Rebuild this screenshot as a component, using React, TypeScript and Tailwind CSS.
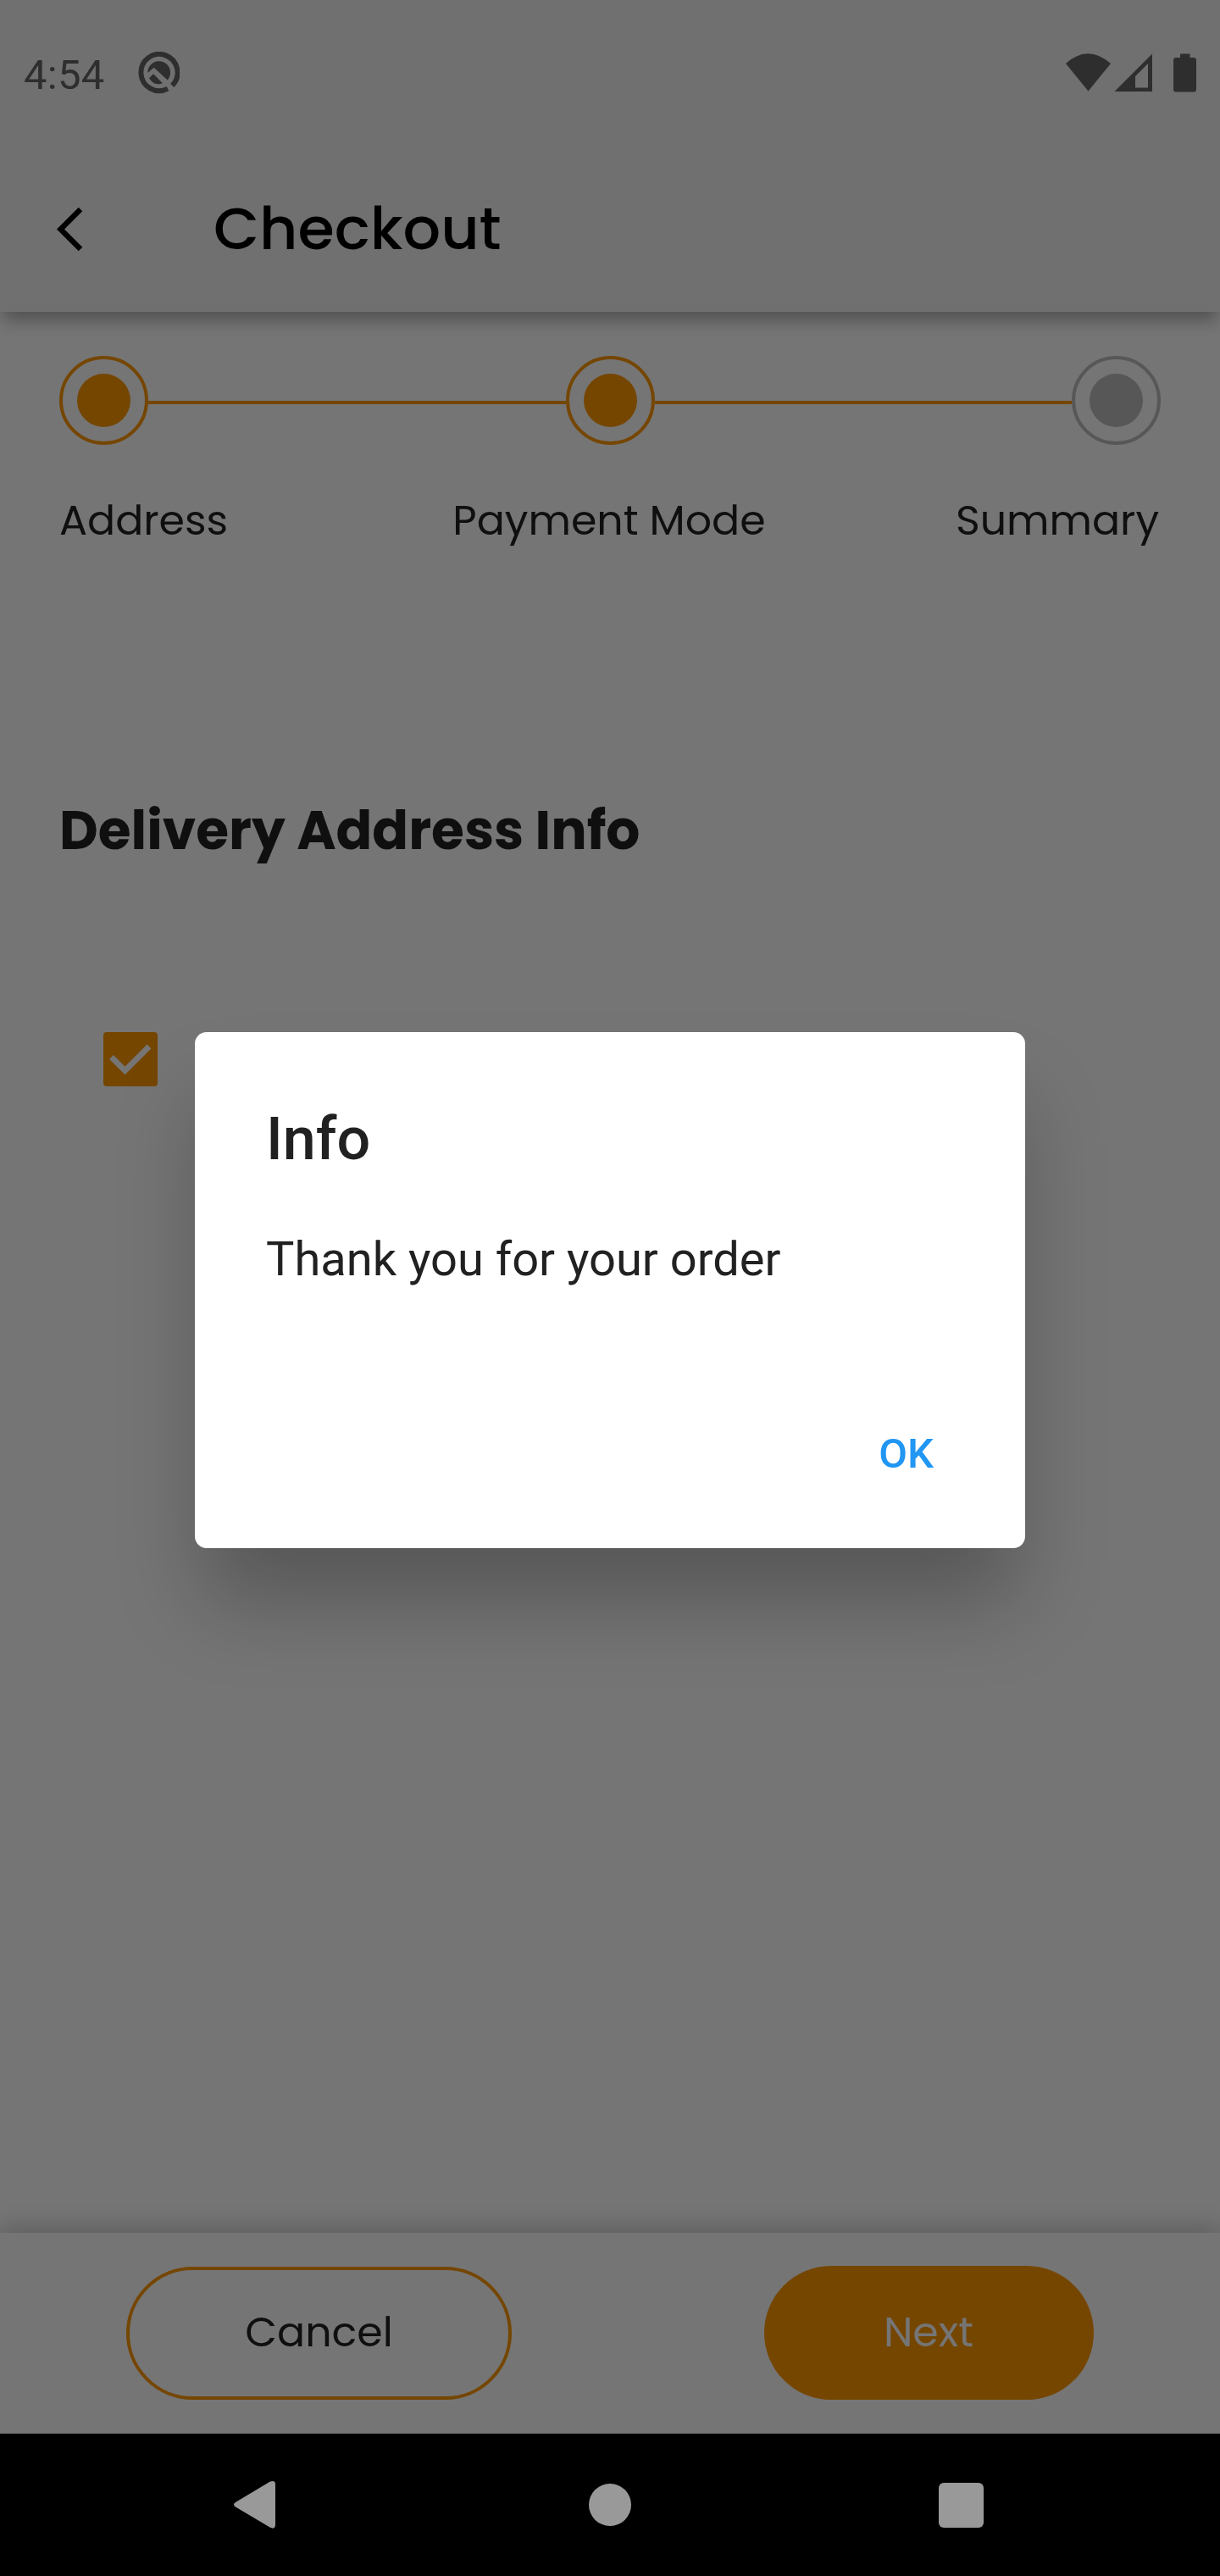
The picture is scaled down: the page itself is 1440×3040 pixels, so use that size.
import type { ReactNode } from "react";

const brand = "font-['Poppins','Inter',sans-serif]";

function StatusBar() {
  return (
    <div className="flex h-[84px] items-start justify-between px-[28px] pt-[60px] font-['Roboto',sans-serif] text-[#2e2e2e]">
      <div className="flex items-start">
        <span className="w-[134px] text-[49px] leading-[57px] tracking-[0.3px]">4:54</span>
        <svg className="mt-[1px] h-[50px] w-[50px]" viewBox="0 0 50 50" fill="none">
          <path d="M36 43.700A21.600 21.600 0 1 1 41.300 39.800" stroke="currentColor" strokeWidth="6" />
          <path d="M12.300 25A13.400 13.400 0 1 1 35.700 33.500L19.700 18.800Z" fill="currentColor" />
          <path d="M19 26.300L30 37.300Q20 41 14 31.300Z" fill="currentColor" />
        </svg>
      </div>
      <svg className="h-[50px] w-[154px]" viewBox="0 0 154 50" fill="currentColor">
        <path d="M0 15Q26-8.500 53 15L26.500 47.500Z" />
        <path fillRule="evenodd" d="M57.500 48L102 3.500V48ZM82 30V43.500H97V15Z" />
        <path d="M135 3.500H146.500V8H151Q154 8 154 11V45.500Q154 48.500 151 48.500H130Q127 48.500 127 45.500V11Q127 8 130 8H135Z" />
      </svg>
    </div>
  );
}

function Header() {
  return (
    <header className="relative h-[368px] bg-[#707070] shadow-[0_14px_18px_-4px_rgba(0,0,0,0.3)]">
      <StatusBar />
      <div className="mt-[88px] flex h-[196px] items-start pt-[56px] text-black">
        <svg className="mt-[16px] ml-[66px] h-[53px] w-[32px]" viewBox="0 0 32 53" fill="none" stroke="currentColor" strokeWidth="6.400">
          <path d="M29 3L5.500 26.500L29 50" />
        </svg>
        <h1 className={`${brand} ml-[154px] text-[70px] leading-[84px] font-medium`}>Checkout</h1>
      </div>
    </header>
  );
}

function Dot({ active }: { active: boolean }) {
  return (
    <div className={`flex size-[105px] items-center justify-center rounded-full border-4 ${active ? "border-[#754600]" : "border-[#575757]"}`}>
      <div className={`size-[63px] rounded-full ${active ? "bg-[#754600]" : "bg-[#575757]"}`} />
    </div>
  );
}

function Stepper() {
  return (
    <div className="px-[70px] pt-[52px]">
      <div className="flex items-center">
        <Dot active />
        <div className="mt-[5px] h-[4px] flex-1 bg-[#754600]" />
        <Dot active />
        <div className="mt-[5px] h-[4px] flex-1 bg-[#754600]" />
        <Dot active={false} />
      </div>
      <div className={`${brand} mt-[54px] flex justify-between text-[49px] leading-[70px] text-[#0f0f0f]`}>
        <span className="w-[300px] whitespace-nowrap">Address</span>
        <span className="pr-[2px] whitespace-nowrap">Payment Mode</span>
        <span className="w-[300px] pr-[2px] text-right whitespace-nowrap">Summary</span>
      </div>
    </div>
  );
}

function Pill({ className, children }: { className: string; children: ReactNode }) {
  return (
    <button className={`${brand} flex items-center justify-center rounded-full text-[49px] ${className}`}>
      {children}
    </button>
  );
}

function Dialog() {
  return (
    <div role="dialog" className="absolute top-[1217.5px] left-[230px] flex h-[609px] w-[980px] flex-col rounded-[14px] bg-white px-[84px] font-['Roboto',sans-serif] text-[#212121] shadow-[0_72px_100px_-10px_rgba(0,0,0,0.26)]">
      <h2 className="mt-[85px] text-[70px] leading-[82px] font-medium">Info</h2>
      <p className="mt-[59px] text-[56px] leading-[84px]">Thank you for your order</p>
      <button className="mt-[159px] mr-[24px] self-end text-[49px] leading-[57px] font-medium text-[#2196f3]">OK</button>
    </div>
  );
}

export default function App() {
  return (
    <div className="relative flex h-[3040px] w-[1440px] flex-col overflow-hidden bg-[#757575]">
      <Header />
      <main className="flex-1">
        <Stepper />
        <h2 className={`${brand} mt-[286px] ml-[70px] text-[63px] leading-[90px] font-bold text-[#0f0f0f]`}>Delivery Address Info</h2>
        <div className="mt-[193px] ml-[122px] size-[64px] rounded-[4px] bg-[#754600]">
          <svg className="size-full" viewBox="0 0 64 64" fill="none" stroke="#757575" strokeWidth="6.800">
            <path d="M9.500 29.500L25.500 45.500L54 17" />
          </svg>
        </div>
      </main>
      <footer className="relative flex h-[237px] items-start bg-[#757575] pt-[39px] shadow-[0_-4px_28px_rgba(0,0,0,0.23)]">
        <Pill className="mt-[1px] ml-[149px] h-[157px] w-[455px] border-4 border-[#754600] pb-[2px] text-[#0f0f0f]">Cancel</Pill>
        <Pill className="ml-[298px] h-[158px] w-[389px] bg-[#754600] pr-[1px] pb-[1px] text-[#757575]">Next</Pill>
      </footer>
      <nav className="relative flex h-[168px] items-center bg-black text-[#999999]">
        <svg className="ml-[275px] h-[58px] w-[51px]" viewBox="0 0 51 58" fill="currentColor">
          <path d="M3 26L43.500 1.800Q50 -1 50 5V52Q50 59 43.500 55.500L3 31.500Q-1 28.700 3 26Z" />
        </svg>
        <div className="ml-[369px] size-[50px] rounded-full bg-[#999999]" />
        <div className="ml-[363px] size-[53px] rounded-[6px] bg-[#999999]" />
      </nav>
      <Dialog />
    </div>
  );
}
